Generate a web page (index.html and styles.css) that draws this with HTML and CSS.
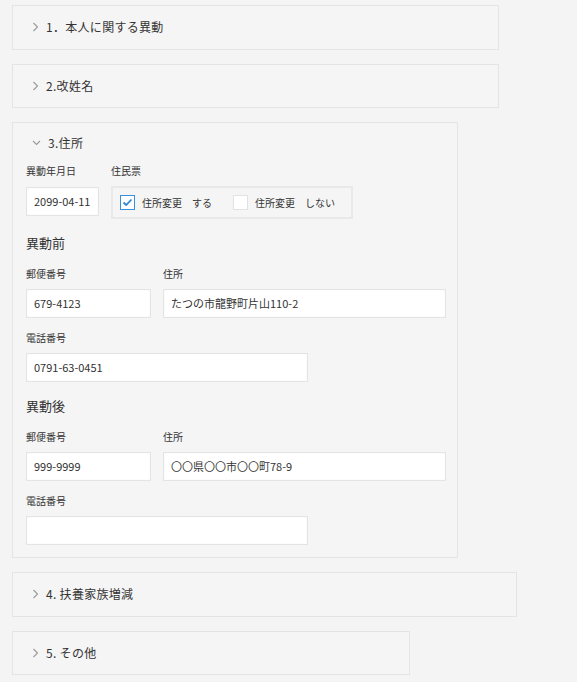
FILE: index.html
```html
<!DOCTYPE html>
<html lang="ja">
<head>
<meta charset="utf-8">
<link rel="stylesheet" href="styles.css">
</head>
<body>
<div class="page">
  <section class="panel w1">
    <div class="panel-head">
      <svg class="chev" width="7" height="10" viewBox="0 0 7 10"><path d="M1.5 1 L5.5 5 L1.5 9" fill="none" stroke="#9a9a9a" stroke-width="1.1"/></svg>
      <span class="title">1．本人に関する異動</span>
    </div>
  </section>
  <section class="panel w1">
    <div class="panel-head">
      <svg class="chev" width="7" height="10" viewBox="0 0 7 10"><path d="M1.5 1 L5.5 5 L1.5 9" fill="none" stroke="#9a9a9a" stroke-width="1.1"/></svg>
      <span class="title">2.改姓名</span>
    </div>
  </section>
  <section class="panel w3">
    <div class="panel-head open">
      <svg class="chev" width="9" height="10" viewBox="0 0 9 10"><path d="M1 3 L4.5 6.5 L8 3" fill="none" stroke="#9a9a9a" stroke-width="1.1"/></svg>
      <span class="title">3.住所</span>
    </div>
    <div class="panel-body">
      <div class="row">
        <div class="field">
          <div class="label">異動年月日</div>
          <div class="input date">2099-04-11</div>
        </div>
        <div class="field">
          <div class="label">住民票</div>
          <div class="choice-group">
            <label class="choice">
              <span class="box checked">
                <svg width="11" height="9" viewBox="0 0 11 9"><path d="M1.5 4.5 L4.2 7 L9.5 1.5" fill="none" stroke="#2f86d9" stroke-width="1.8"/></svg>
              </span>
              <span>住所変更　する</span>
            </label>
            <label class="choice">
              <span class="box"></span>
              <span>住所変更　しない</span>
            </label>
          </div>
        </div>
      </div>

      <h3 class="sub">異動前</h3>
      <div class="row">
        <div class="field">
          <div class="label">郵便番号</div>
          <div class="input zip">679-4123</div>
        </div>
        <div class="field">
          <div class="label">住所</div>
          <div class="input addr">たつの市龍野町片山110-2</div>
        </div>
      </div>
      <div class="field gap-top">
        <div class="label">電話番号</div>
        <div class="input tel">0791-63-0451</div>
      </div>

      <h3 class="sub">異動後</h3>
      <div class="row">
        <div class="field">
          <div class="label">郵便番号</div>
          <div class="input zip">999-9999</div>
        </div>
        <div class="field">
          <div class="label">住所</div>
          <div class="input addr">〇〇県〇〇市〇〇町78-9</div>
        </div>
      </div>
      <div class="field gap-top">
        <div class="label">電話番号</div>
        <div class="input tel"></div>
      </div>
    </div>
  </section>
  <section class="panel w4">
    <div class="panel-head">
      <svg class="chev" width="7" height="10" viewBox="0 0 7 10"><path d="M1.5 1 L5.5 5 L1.5 9" fill="none" stroke="#9a9a9a" stroke-width="1.1"/></svg>
      <span class="title">4. 扶養家族増減</span>
    </div>
  </section>
  <section class="panel w5">
    <div class="panel-head">
      <svg class="chev" width="7" height="10" viewBox="0 0 7 10"><path d="M1.5 1 L5.5 5 L1.5 9" fill="none" stroke="#9a9a9a" stroke-width="1.1"/></svg>
      <span class="title">5. その他</span>
    </div>
  </section>
</div>
</body>
</html>
```

FILE: styles.css
```css
html, body {
  margin: 0;
  padding: 0;
  background: #f4f4f4;
}
body {
  font-family: "Noto Sans CJK JP", "Noto Sans", sans-serif;
  color: #333;
  font-size: 11px;
}
.page {
  padding: 5px 0 0 12px;
  display: flex;
  flex-direction: column;
  align-items: flex-start;
  gap: 14px;
}
.panel {
  box-sizing: border-box;
  border: 1px solid #e4e4e4;
  background: #f5f5f5;
}
.w1 { width: 487px; }
.w3 { width: 446px; }
.w4 { width: 505px; }
.w5 { width: 398px; }
.panel-head {
  height: 42.5px;
  display: flex;
  align-items: center;
  padding-left: 19px;
}
.panel-head.open {
  height: 40px;
}
.chev { margin-right: 7px; flex: none; }
.title {
  font-size: 12px;
  color: #333;
  letter-spacing: 0.3px;
  line-height: 16px;
}
.panel-body {
  padding: 0 11px 12px 13px;
}
.row {
  display: flex;
  gap: 12px;
  align-items: flex-start;
}
.field {
  display: flex;
  flex-direction: column;
}
.label {
  height: 16px;
  line-height: 16px;
  font-size: 10px;
  margin-bottom: 7px;
}
.input {
  box-sizing: border-box;
  height: 29px;
  line-height: 27px;
  border: 1px solid #e4e4e4;
  background: #fff;
  box-shadow: inset 0 0 2px rgba(0,0,0,0.05);
  padding-left: 7px;
  font-size: 11px;
  color: #333;
  white-space: nowrap;
}
.date { width: 73px; margin-top: 1px; }
.zip { width: 125px; }
.addr { width: 283px; }
.tel { width: 282px; }
.choice-group {
  box-sizing: border-box;
  width: 242px;
  height: 33px;
  border: 2px solid #e9e9e9;
  display: flex;
  align-items: center;
  padding-left: 7px;
  gap: 21px;
}
.choice {
  display: flex;
  align-items: center;
  gap: 7px;
  font-size: 10px;
  white-space: nowrap;
}
.box {
  box-sizing: border-box;
  width: 15px;
  height: 15px;
  border: 1px solid #e2e2e2;
  background: #fff;
  display: flex;
  align-items: center;
  justify-content: center;
  flex: none;
}
.box.checked {
  border: 1.5px solid #3b8fdc;
}
.sub {
  margin: 14px 0 13px 0;
  font-size: 13px;
  font-weight: normal;
  line-height: 20px;
  color: #333;
}
.gap-top { margin-top: 12px; }
```
